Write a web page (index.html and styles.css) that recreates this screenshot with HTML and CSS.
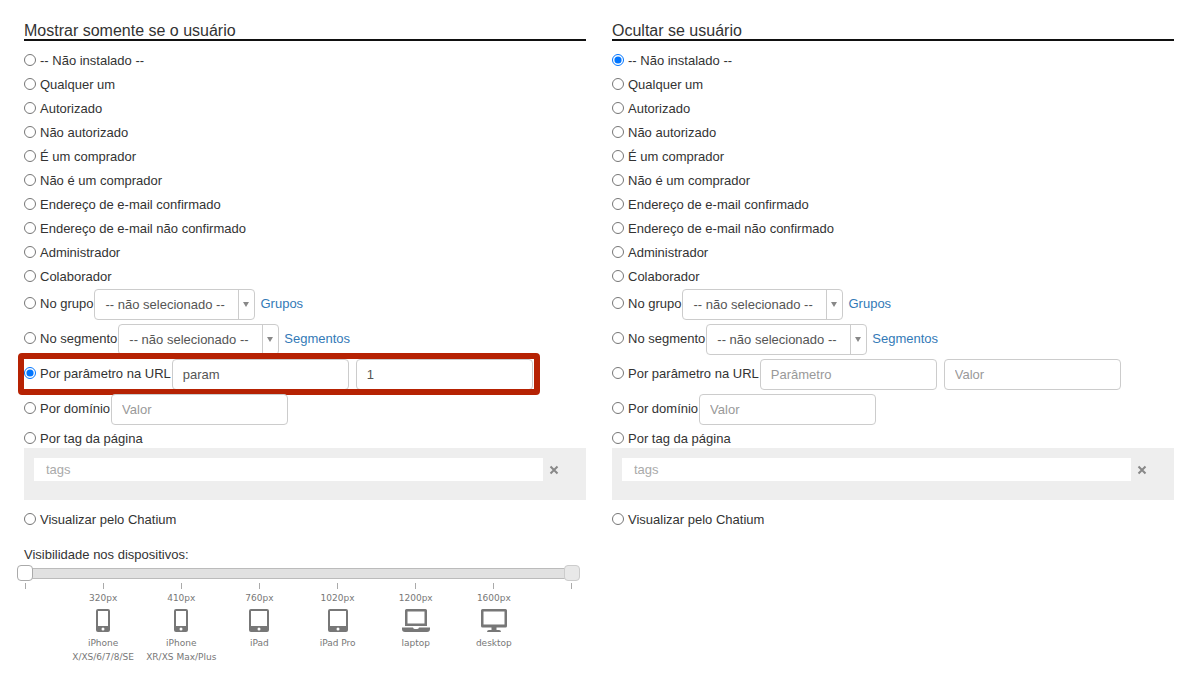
FILE: index.html
```html
<!DOCTYPE html>
<html lang="pt">
<head>
<meta charset="utf-8">
<title>Condições de visibilidade</title>
<link rel="stylesheet" href="styles.css">
</head>
<body>
<form class="conditions">
  <section class="column">
    <h2 class="column-title">Mostrar somente se o usuário</h2>
    <div class="option"><label><input type="radio" name="show">-- Não instalado --</label></div>
    <div class="option"><label><input type="radio" name="show">Qualquer um</label></div>
    <div class="option"><label><input type="radio" name="show">Autorizado</label></div>
    <div class="option"><label><input type="radio" name="show">Não autorizado</label></div>
    <div class="option"><label><input type="radio" name="show">É um comprador</label></div>
    <div class="option"><label><input type="radio" name="show">Não é um comprador</label></div>
    <div class="option"><label><input type="radio" name="show">Endereço de e-mail confirmado</label></div>
    <div class="option"><label><input type="radio" name="show">Endereço de e-mail não confirmado</label></div>
    <div class="option"><label><input type="radio" name="show">Administrador</label></div>
    <div class="option"><label><input type="radio" name="show">Colaborador</label></div>
    <div class="option option-field">
      <label><input type="radio" name="show">No grupo</label>
      <span class="dropdown"><select aria-label="Grupo"><option>-- não selecionado --</option></select></span>
      <a href="#">Grupos</a>
    </div>
    <div class="option option-field">
      <label><input type="radio" name="show">No segmento</label>
      <span class="dropdown"><select aria-label="Segmento"><option>-- não selecionado --</option></select></span>
      <a href="#">Segmentos</a>
    </div>
    <div class="option option-field highlighted">
      <label><input type="radio" name="show" checked>Por parâmetro na URL</label>
      <input class="text" type="text" aria-label="Parâmetro" placeholder="Parâmetro" value="param">
      <input class="text text-next" type="text" aria-label="Valor" placeholder="Valor" value="1">
    </div>
    <div class="option option-field">
      <label><input type="radio" name="show">Por domínio</label>
      <input class="text" type="text" aria-label="Domínio" placeholder="Valor">
    </div>
    <div class="option option-tag"><label><input type="radio" name="show">Por tag da página</label></div>
    <div class="tags">
      <input class="tags-input" type="text" aria-label="Tags" placeholder="tags">
      <button class="tags-clear" type="button" aria-label="Limpar"><svg width="10" height="10" viewBox="0 0 10 10"><path d="M1.500 1.500L8.500 8.500M8.500 1.500L1.500 8.500" stroke="#888" stroke-width="2"/></svg></button>
    </div>
    <div class="option"><label><input type="radio" name="show">Visualizar pelo Chatium</label></div>

    <div class="devices">
      <p class="devices-title">Visibilidade nos dispositivos:</p>
      <div class="range">
        <div class="track"></div>
        <input class="handle handle-start" type="range" min="0" max="7" value="0" aria-label="Largura mínima">
        <input class="handle handle-end" type="range" min="0" max="7" value="7" aria-label="Largura máxima">
      </div>
      <div class="ticks"><i></i><i></i><i></i><i></i><i></i><i></i><i></i><i></i></div>
      <div class="device-list">
        <div class="device">
          <span>320px</span>
          <svg width="14" height="23" viewBox="0 0 14 23"><path fill="#777" fill-rule="evenodd" d="M2 0H12Q14 0 14 2V21Q14 23 12 23H2Q0 23 0 21V2Q0 0 2 0ZM2 2V17H12V2ZM7 18.500A1.500 1.500 0 1 0 7 21.500A1.500 1.500 0 1 0 7 18.500Z"/></svg>
          <span>iPhone<br>X/XS/6/7/8/SE</span>
        </div>
        <div class="device">
          <span>410px</span>
          <svg width="14" height="23" viewBox="0 0 14 23"><path fill="#777" fill-rule="evenodd" d="M2 0H12Q14 0 14 2V21Q14 23 12 23H2Q0 23 0 21V2Q0 0 2 0ZM2 2V17H12V2ZM7 18.500A1.500 1.500 0 1 0 7 21.500A1.500 1.500 0 1 0 7 18.500Z"/></svg>
          <span>iPhone<br>XR/XS Max/Plus</span>
        </div>
        <div class="device">
          <span>760px</span>
          <svg width="20" height="23" viewBox="0 0 20 23"><path fill="#777" fill-rule="evenodd" d="M2 0H18Q20 0 20 2V21Q20 23 18 23H2Q0 23 0 21V2Q0 0 2 0ZM2 2V17H18V2ZM10 18.500A1.500 1.500 0 1 0 10 21.500A1.500 1.500 0 1 0 10 18.500Z"/></svg>
          <span>iPad</span>
        </div>
        <div class="device">
          <span>1020px</span>
          <svg width="20" height="23" viewBox="0 0 20 23"><path fill="#777" fill-rule="evenodd" d="M2 0H18Q20 0 20 2V21Q20 23 18 23H2Q0 23 0 21V2Q0 0 2 0ZM2 2V17H18V2ZM10 18.500A1.500 1.500 0 1 0 10 21.500A1.500 1.500 0 1 0 10 18.500Z"/></svg>
          <span>iPad Pro</span>
        </div>
        <div class="device">
          <span>1200px</span>
          <svg width="28" height="23" viewBox="0 0 28 23"><path fill="#777" fill-rule="evenodd" d="M4.500 0H23.500Q25 0 25 1.500V17H3V1.500Q3 0 4.500 0ZM5.500 2.500V14.500H22.500V2.500ZM0 18.500H11Q11.500 20 13 20H15Q16.500 20 17 18.500H28V20Q28 23 25 23H3Q0 23 0 20Z"/></svg>
          <span>laptop</span>
        </div>
        <div class="device">
          <span>1600px</span>
          <svg width="26" height="23" viewBox="0 0 26 23"><path fill="#777" fill-rule="evenodd" d="M1.500 0H24.500Q26 0 26 1.500V17Q26 18.500 24.500 18.500H15.500V21H18Q20 21 20 23H6Q6 21 8 21H10.500V18.500H1.500Q0 18.500 0 17V1.500Q0 0 1.500 0ZM2.500 2.500V15.500H23.500V2.500Z"/></svg>
          <span>desktop</span>
        </div>
      </div>
    </div>
  </section>

  <section class="column">
    <h2 class="column-title">Ocultar se usuário</h2>
    <div class="option"><label><input type="radio" name="hide" checked>-- Não instalado --</label></div>
    <div class="option"><label><input type="radio" name="hide">Qualquer um</label></div>
    <div class="option"><label><input type="radio" name="hide">Autorizado</label></div>
    <div class="option"><label><input type="radio" name="hide">Não autorizado</label></div>
    <div class="option"><label><input type="radio" name="hide">É um comprador</label></div>
    <div class="option"><label><input type="radio" name="hide">Não é um comprador</label></div>
    <div class="option"><label><input type="radio" name="hide">Endereço de e-mail confirmado</label></div>
    <div class="option"><label><input type="radio" name="hide">Endereço de e-mail não confirmado</label></div>
    <div class="option"><label><input type="radio" name="hide">Administrador</label></div>
    <div class="option"><label><input type="radio" name="hide">Colaborador</label></div>
    <div class="option option-field">
      <label><input type="radio" name="hide">No grupo</label>
      <span class="dropdown"><select aria-label="Grupo"><option>-- não selecionado --</option></select></span>
      <a href="#">Grupos</a>
    </div>
    <div class="option option-field">
      <label><input type="radio" name="hide">No segmento</label>
      <span class="dropdown"><select aria-label="Segmento"><option>-- não selecionado --</option></select></span>
      <a href="#">Segmentos</a>
    </div>
    <div class="option option-field">
      <label><input type="radio" name="hide">Por parâmetro na URL</label>
      <input class="text" type="text" aria-label="Parâmetro" placeholder="Parâmetro">
      <input class="text text-next" type="text" aria-label="Valor" placeholder="Valor">
    </div>
    <div class="option option-field">
      <label><input type="radio" name="hide">Por domínio</label>
      <input class="text" type="text" aria-label="Domínio" placeholder="Valor">
    </div>
    <div class="option option-tag"><label><input type="radio" name="hide">Por tag da página</label></div>
    <div class="tags">
      <input class="tags-input" type="text" aria-label="Tags" placeholder="tags">
      <button class="tags-clear" type="button" aria-label="Limpar"><svg width="10" height="10" viewBox="0 0 10 10"><path d="M1.500 1.500L8.500 8.500M8.500 1.500L1.500 8.500" stroke="#888" stroke-width="2"/></svg></button>
    </div>
    <div class="option"><label><input type="radio" name="hide">Visualizar pelo Chatium</label></div>
  </section>
</form>
</body>
</html>
```
FILE: styles.css
```css
*, *::before, *::after { box-sizing: border-box; }

body {
  margin: 0;
  background: #fff;
  color: #333;
  font: 13px/20px "Liberation Sans", Arial, sans-serif;
}

input, select, button { font: inherit; margin: 0; }

a { color: #337ab7; text-decoration: none; }

.conditions {
  display: grid;
  grid-template-columns: 1fr 1fr;
  gap: 26px;
  padding: 20px 26px 12px 24px;
}

.column { min-width: 0; }

.column-title {
  margin: 0 0 8px;
  border-bottom: 2px solid #111;
  font-size: 16px;
  font-weight: 400;
  line-height: 22px;
  height: 21px;
}

.option {
  display: flex;
  align-items: center;
  height: 24px;
}

.option label {
  display: flex;
  align-items: center;
  gap: 4px;
  white-space: nowrap;
}

.option input[type="radio"] {
  width: 12px;
  height: 12px;
  margin-bottom: 2px;
}

.option-field {
  position: relative;
  align-items: flex-start;
  gap: 1px;
  height: 35px;
}

.option-field > label,
.option-field > a { line-height: 29px; }

.option-field > a { margin-left: 4px; }

.option-tag { height: 19px; }

.text {
  width: 177px;
  height: 31px;
  padding: 0 10px;
  border: 1px solid #ccc;
  border-radius: 4px;
  background: #fff;
  color: #555;
}

.text::placeholder { color: #999; opacity: 1; }

.text-next { margin-left: 6px; }

.dropdown { position: relative; }

.dropdown select {
  display: block;
  width: 161px;
  height: 31px;
  padding: 0 26px 0 10px;
  border: 1px solid #ccc;
  border-radius: 4px;
  background: #fff;
  color: #555;
  appearance: none;
}

.dropdown::before {
  content: "";
  position: absolute;
  top: 1px;
  bottom: 1px;
  right: 16px;
  border-left: 1px solid #ccc;
}

.dropdown::after {
  content: "";
  position: absolute;
  top: 13px;
  right: 6px;
  border: 3px solid transparent;
  border-top: 5px solid #888;
  border-bottom: 0;
}

.highlighted::after {
  content: "";
  position: absolute;
  top: -6px;
  left: -6px;
  width: 522px;
  height: 42px;
  border: 6px solid #b62203;
  border-radius: 4px;
  pointer-events: none;
}

.tags {
  display: flex;
  align-items: center;
  gap: 6px;
  margin-bottom: 8px;
  padding: 10px 27px 19px 10px;
  background: #eee;
}

.tags-input {
  flex: 1;
  min-width: 0;
  height: 23px;
  padding: 0 12px;
  border: 0;
  background: #fff;
}

.tags-input::placeholder { color: #aaa; opacity: 1; }

.tags-clear {
  display: flex;
  padding: 0;
  border: 0;
  background: none;
}

.devices { margin-top: 13px; }

.devices-title { margin: 0; }

.range {
  position: relative;
  margin: 0 14px 0 1px;
  padding: 3px 0 2px;
}

.track {
  height: 11px;
  border: 1px solid #bbb;
  background: #e1e1e1;
}

.handle {
  position: absolute;
  top: 0;
  left: -8px;
  width: calc(100% + 16px);
  height: 16px;
  appearance: none;
  background: none;
  pointer-events: none;
}

.handle::-webkit-slider-thumb {
  appearance: none;
  box-sizing: border-box;
  width: 16px;
  height: 16px;
  border: 1px solid #aaa;
  border-radius: 4px;
  background: #fff;
  pointer-events: auto;
}

.handle-end::-webkit-slider-thumb {
  border-color: #ccc;
  background: #e8e8e8;
}

.ticks {
  display: flex;
  justify-content: space-between;
  margin: 2px 14px 0 1px;
}

.ticks i {
  width: 1px;
  height: 6px;
  background: #aaa;
}

.device-list {
  display: grid;
  grid-template-columns: repeat(6, 1fr);
  margin: 2px 14px 0 1px;
  padding: 0 calc((100% - 15px) / 14);
  color: #777;
  font: 9px/14px "DejaVu Sans", Verdana, sans-serif;
}

.device {
  display: flex;
  flex-direction: column;
  align-items: center;
  gap: 4px;
  text-align: center;
  white-space: nowrap;
}
```
